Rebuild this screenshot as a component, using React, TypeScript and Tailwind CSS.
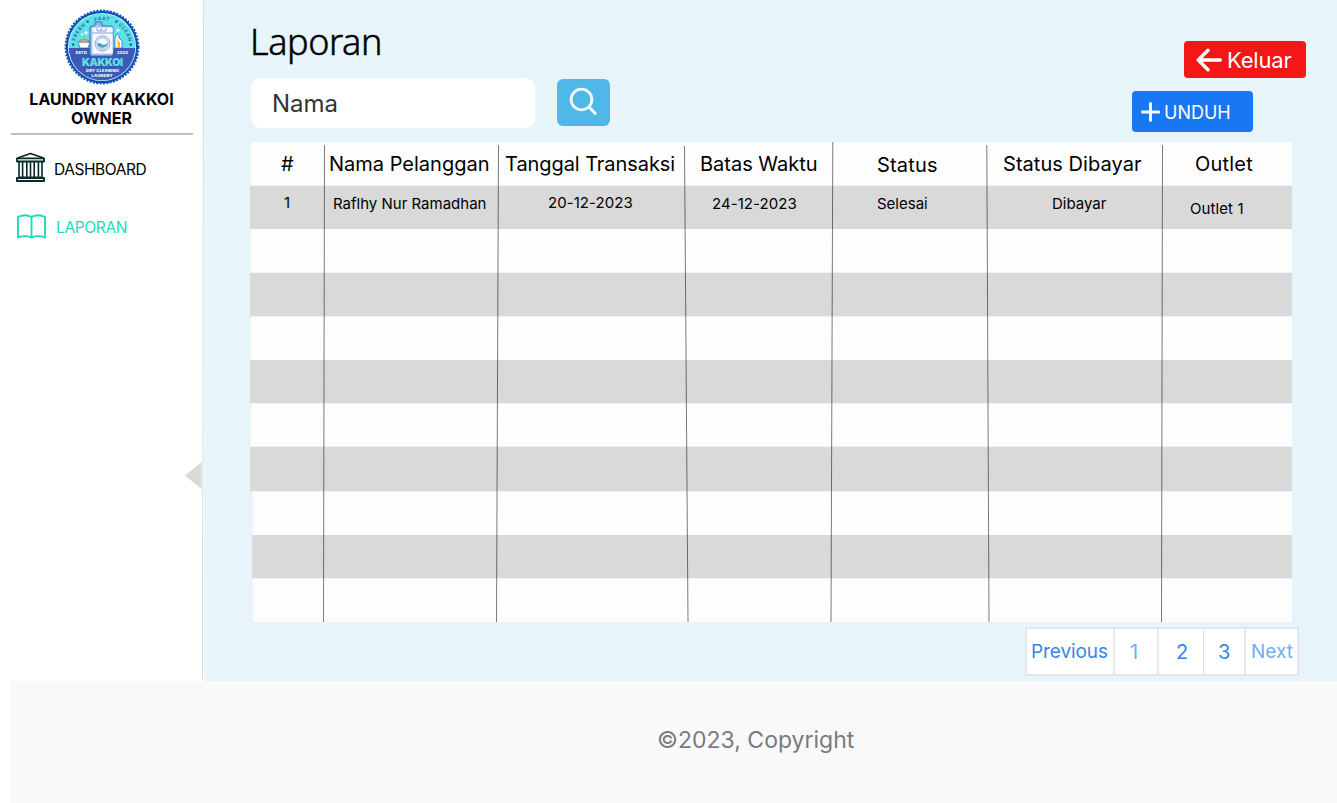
const white = "bg-[#fdfdfd]";
const gray = "bg-[#d9d9d9]";

const rows = [
  { left: "ml-px", fill: white, edge: "border-b" },
  { left: "ml-0", fill: gray, edge: "" },
  { left: "ml-px", fill: white, edge: "border-b" },
  { left: "ml-0", fill: gray, edge: "border-b" },
  { left: "ml-px", fill: white, edge: "" },
  { left: "ml-0", fill: gray, edge: "border-b" },
  { left: "ml-px", fill: white, edge: "border-b" },
  { left: "ml-0", fill: gray, edge: "" },
  { left: "ml-[3px]", fill: white, edge: "border-t" },
  { left: "ml-[2px]", fill: gray, edge: "" },
  { left: "ml-[3px]", fill: white, edge: "border-t" },
];

const headers = [
  { text: "#", cls: "w-[73px] pl-[30px] pt-[7px]" },
  { text: "Nama Pelanggan", cls: "w-[174px] pl-[5px] pt-[7px]" },
  { text: "Tanggal Transaksi", cls: "w-[187px] pl-[7px] pt-[7px] tracking-[-0.07px]" },
  { text: "Batas Waktu", cls: "w-[147px] pl-[15px] pt-[7px]" },
  { text: "Status", cls: "w-[155px] pl-[45px] pt-[8px] tracking-[0.2px]" },
  { text: "Status Dibayar", cls: "w-[175px] pl-[16px] pt-[7px] tracking-[0.05px]" },
  { text: "Outlet", cls: "w-[130px] pl-[33px] pt-[7px] tracking-[0.2px]" },
];

const record = [
  { text: "1", cls: "w-[74px] pl-[34px] pt-[6px]" },
  { text: "Raflhy Nur Ramadhan", cls: "w-[174px] pl-[9px] pt-[7px]" },
  { text: "20-12-2023", cls: "w-[187px] pl-[50px] pt-[6px] tracking-[0.06px]" },
  { text: "24-12-2023", cls: "w-[147px] pl-[27px] pt-[7px] tracking-[0.06px]" },
  { text: "Selesai", cls: "w-[155px] pl-[45px] pt-[7px]" },
  { text: "Dibayar", cls: "w-[175px] pl-[65px] pt-[7px]" },
  { text: "Outlet 1", cls: "w-[130px] pl-[28px] pt-[12px] tracking-[0.1px]" },
];

const arcWords = [
  { text: "FRESH", at: "19%" },
  { text: "FAST", at: "50.5%" },
  { text: "CLEAN", at: "82%" },
];

function Logo() {
  return (
    <svg className="block h-[76px] w-[76px]" viewBox="0 0 76 76">
      <defs>
        <path id="arc" d="M10.5 38.5 A27.5 27.5 0 0 1 65.5 38.5" />
        <clipPath id="disc"><circle cx="38" cy="38" r="33.3" /></clipPath>
      </defs>
      <circle cx="38" cy="38" r="36.2" fill="#0b4fb3" />
      <circle cx="38" cy="38" r="36.6" fill="none" stroke="#0b4fb3" strokeWidth="1.6" strokeDasharray="2 1.4" />
      <circle cx="38" cy="38" r="34.1" fill="#dff3ff" />
      <g clipPath="url(#disc)">
        <rect width="76" height="39" fill="#5ce1e6" />
        <rect y="39" width="76" height="37" fill="#3c5bb5" />
      </g>
      <g fill="#2e62ae" fontFamily="Inter" fontWeight="700" fontSize="4.6" letterSpacing="0.9" textAnchor="middle">
        {arcWords.map((w) => (
          <text key={w.at}><textPath href="#arc" startOffset={w.at}>{w.text}</textPath></text>
        ))}
      </g>
      <g fill="#2e62ae">
        <circle cx="9.2" cy="35.6" r="1.3" />
        <circle cx="23.6" cy="12.6" r="1.3" />
        <circle cx="52.4" cy="12.6" r="1.3" />
        <circle cx="66.8" cy="35.6" r="1.3" />
      </g>
      <path d="M22 21l.8 2 2 .8-2 .8-.8 2-.8-2-2-.8 2-.8zM18 24l.5 1 1 .5-1 .5-.5 1-.5-1-1-.5 1-.5zM54 19l.7 1.6 1.6.7-1.6.7-.7 1.6-.7-1.6-1.6-.7 1.6-.7z" fill="#fff" />
      <path d="M14 33h12l-2 6h-8z" fill="#fff" stroke="#385aac" strokeWidth=".7" />
      <path d="M15 33q1-3 3-2 2-2 4 0 3-.5 3 2z" fill="#f7b52c" stroke="#385aac" strokeWidth=".5" />
      <path d="M53 25l2 1v3l3 3v7h-7V29z" fill="#fff" stroke="#385aac" strokeWidth=".7" />
      <path d="M53 30l3 4v5h-2z" fill="#f7b52c" />
      <path d="M31 17v-3q0-1 1-1h5q1 0 1 1v3h9q2 0 2 2v26q0 2-2 2H28q-2 0-2-2V19q0-2 2-2z" fill="#a9c9f5" stroke="#3b65bb" strokeWidth="1" />
      <rect x="28" y="18" width="21" height="27" rx="1.5" fill="#f5f8ff" stroke="#8cafdf" strokeWidth=".6" />
      <path d="M32 15h5M33 19v3h9v-3m-5 0v3M28 24h21" fill="none" stroke="#6f8dca" strokeWidth=".8" />
      <circle cx="38.5" cy="34.5" r="7.5" fill="#e5efff" stroke="#87a9df" strokeWidth="1" />
      <circle cx="38.5" cy="34.5" r="5.5" fill="#fff" stroke="#7798cf" strokeWidth=".7" />
      <path d="M33.2 35q2-2 4.5 0t6-1a5.4 5.4 0 0 1-10.5 1z" fill="#4b9fd6" />
      <g fontFamily="Inter" textAnchor="middle">
        <text x="38.5" y="56.8" fontSize="10.5" fontWeight="900" fill="#5ce1e6" textLength="41">KAKKOI</text>
        <text x="17.3" y="44.8" fontSize="4" fontWeight="800" fill="#fff" textLength="11">ESTD</text>
        <text x="58.5" y="44.8" fontSize="4" fontWeight="800" fill="#fff" textLength="11">2023</text>
        <text x="38.5" y="63" fontSize="4" fontWeight="800" fill="#fff" textLength="33">DRY CLEANING</text>
        <text x="38" y="67.7" fontSize="4" fontWeight="800" fill="#fff" textLength="21">LAUNDRY</text>
      </g>
    </svg>
  );
}

function Sidebar() {
  return (
    <aside className="relative flex w-[204px] shrink-0 flex-col bg-white">
      <div className="ml-[64px] mt-[9px] h-[76px]"><Logo /></div>
      <div className="mr-px mt-[5px] text-center text-[16px] font-bold leading-[19px] text-black">
        LAUNDRY KAKKOI<br />OWNER
      </div>
      <div className="ml-[11px] mt-[5px] h-[2px] w-[182px] bg-[#bfbfbf]" />
      <a className="mt-[17px] flex h-[31px] items-center pl-[15px] text-[15.5px] text-black">
        <svg className="block h-[31px] w-[31px] shrink-0" viewBox="0 0 31 31" fill="none" stroke="#062b27" strokeWidth="1.8" strokeLinejoin="round">
          <path d="M2.5 6L15.5 1.5 28.5 6" />
          <path d="M2 6.3h27v3.2H2zM1.9 26h27.2v3H1.9z" />
          <path d="M4 9.5v16M7.6 9.5v16M11.8 9.5v16M15.5 9.5v16M19.2 9.5v16M23.4 9.5v16M27 9.5v16M3.5 25.3h24" strokeWidth="1.6" />
        </svg>
        <span className="ml-[8px] mt-[4px] tracking-[-0.43px]">DASHBOARD</span>
      </a>
      <a className="mt-[29px] flex h-[28px] items-center pl-[16px] text-[15.5px] text-[#1bdcb8]">
        <svg className="block h-[28px] w-[31px] shrink-0" viewBox="0 0 31 28" fill="none" stroke="#1bdcb8" strokeWidth="1.9" strokeLinejoin="round" strokeLinecap="round">
          <path d="M15.5 5C11 2.7 6 3 2 5v20.5c4-1.6 9-1.9 13.5 0 4.5-1.9 9.5-1.6 13.5 0V5c-4-2-9-2.3-13.5 0v20.5" />
        </svg>
        <span className="ml-[9px] mt-[3px] tracking-[-0.35px]">LAPORAN</span>
      </a>
      <svg className="absolute left-[185px] top-[462px] h-[28px] w-[17px]" viewBox="0 0 17 28">
        <path d="M0 13.5L16.5 0v27z" fill="#d9d9d9" />
      </svg>
      <svg className="absolute right-0 top-0 h-[680px] w-[3px]" viewBox="0 0 3 680">
        <path d="M2.6 0L1.4 680" stroke="#d9d9d9" strokeWidth="1" />
      </svg>
    </aside>
  );
}

function ReportTable() {
  return (
    <div className="relative ml-[46px] mt-[10px] flex h-[480px] w-[1042px] flex-col text-black">
      {rows.map((row, i) => (
        <div key={i} className={`flex h-[43.64px] shrink-0 items-start border-[#e7f5fb] ${row.edge} ${row.left} ${row.fill}`}>
          {i === 0 && headers.map((c) => (
            <div key={c.text} className={`shrink-0 whitespace-nowrap text-[20px] leading-[30px] ${c.cls}`}>{c.text}</div>
          ))}
          {i === 1 && record.map((c) => (
            <div key={c.text} className={`shrink-0 whitespace-nowrap text-[15px] leading-[22px] ${c.cls}`}>{c.text}</div>
          ))}
        </div>
      ))}
      <svg className="absolute left-0 top-0 h-[480px] w-[1042px]" viewBox="0 0 1042 480" stroke="#000" strokeOpacity=".52">
        <path d="M74.5 3L73.5 480M248.5 3L246.5 480M434.5 4L438 480M582.8 0L581 480M736.8 3L739 480M912.5 3L911.5 480" />
      </svg>
    </div>
  );
}

export default function App() {
  return (
    <div className="flex h-[803px] w-[1337px] flex-col overflow-hidden bg-white font-['Inter',sans-serif]">
      <div className="flex h-[681px] shrink-0">
        <Sidebar />
        <main className="flex w-[1133px] flex-col bg-[#e7f5fb]">
          <div className="flex h-[132px] shrink-0">
            <section className="w-[900px] pl-[46px]">
              <h1 className="mt-[18px] h-[48px] font-['Noto_Sans',sans-serif] text-[36px] font-light leading-[48px] tracking-[-0.4px] text-black [-webkit-text-stroke:0.5px_black]">Laporan</h1>
              <div className="mt-[12px] flex">
                <div className="ml-px flex h-[50px] w-[284px] items-center rounded-[10px] bg-white pl-[21px] pt-px text-[24px] text-[#333]">Nama</div>
                <button className="ml-[22px] mt-px flex h-[47px] w-[53px] items-center justify-center rounded-[6px] bg-[#4fb8e9]">
                  <svg className="mb-[3px] mr-[2px] h-[30px] w-[30px]" viewBox="0 0 30 30" fill="none" stroke="#fff" strokeWidth="2.8">
                    <circle cx="13.5" cy="13.5" r="10.4" stroke="#eefaff" />
                    <path d="M20.8 20.8L28 28.2" />
                  </svg>
                </button>
              </div>
            </section>
            <section className="w-[233px] pt-[41px]">
              <button className="ml-[80px] flex h-[37px] w-[122px] items-center rounded-[4px] bg-[#f51717] pl-[12px] text-[22px] text-white">
                <svg className="h-[24px] w-[26px] shrink-0" viewBox="0 0 26 24" fill="none" stroke="#fff" strokeWidth="3.4" strokeLinecap="round" strokeLinejoin="round">
                  <path d="M24.3 12H2.3M12 2.3L2.3 12l9.7 9.7" />
                </svg>
                <span className="ml-[5px] mt-[2px] tracking-[-0.2px]">Keluar</span>
              </button>
              <button className="ml-[28px] mt-[13px] flex h-[41px] w-[121px] items-center rounded-[4px] bg-[#1877f2] pl-[9px] text-[18px] text-white">
                <svg className="mr-px h-[20px] w-[19px] shrink-0" viewBox="0 0 19 20" stroke="#fff" strokeWidth="2.8" strokeLinecap="round">
                  <path d="M9.5 1.5v17M1.4 10h16.6" />
                </svg>
                <span className="ml-[3px] mt-[2px]">UNDUH</span>
              </button>
            </section>
          </div>
          <ReportTable />
          <nav className="ml-[821px] mt-[5px] flex h-[49px] w-[274px] border-2 border-[#dfe7ea] bg-white text-[20px] leading-[46px] text-[#3785ee]">
            <div className="w-[88px] border-r-2 border-[#e8e8e8] pl-[4px] text-[19px] tracking-[-0.08px]">Previous</div>
            <div className="w-[44px] border-r-2 border-[#e8e8e8] pl-[15px] text-[#72adf8]">1</div>
            <div className="w-[45px] border-r border-[#dedede] pl-[17px]">2</div>
            <div className="w-[42px] border-r-2 border-[#e8e8e8] pl-[14px]">3</div>
            <div className="w-[50px] pl-[5px] text-[19px] text-[#72adf8]">Next</div>
          </nav>
        </main>
      </div>
      <footer className="ml-[11px] flex h-[122px] shrink-0 bg-[#f9f9f9] pl-[646px] pt-[42px] text-[23px] leading-[34px] text-[#7b7b7b]">©2023, Copyright</footer>
    </div>
  );
}
